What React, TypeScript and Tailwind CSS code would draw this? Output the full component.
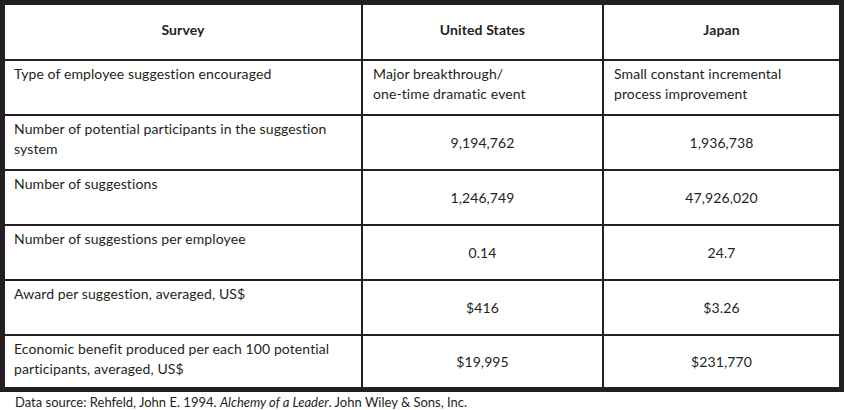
const rows: { label: string[]; us: string[]; jp: string[]; top?: boolean }[] = [
  {
    label: ["Type of employee suggestion encouraged"],
    us: ["Major breakthrough/", "one-time dramatic event"],
    jp: ["Small constant incremental", "process improvement"],
    top: true,
  },
  {
    label: ["Number of potential participants in the suggestion", "system"],
    us: ["9,194,762"],
    jp: ["1,936,738"],
  },
  { label: ["Number of suggestions"], us: ["1,246,749"], jp: ["47,926,020"] },
  { label: ["Number of suggestions per employee"], us: ["0.14"], jp: ["24.7"] },
  { label: ["Award per suggestion, averaged, US$"], us: ["$416"], jp: ["$3.26"] },
  {
    label: ["Economic benefit produced per each 100 potential", "participants, averaged, US$"],
    us: ["$19,995"],
    jp: ["$231,770"],
  },
];

function Lines({ lines }: { lines: string[] }) {
  return (
    <>
      {lines.map((l) => (
        <div key={l}>{l}</div>
      ))}
    </>
  );
}

export default function App() {
  return (
    <div className="w-[846px] h-[410px] overflow-hidden bg-white text-[#231f20] font-['Lato',sans-serif] text-[14px] leading-[20px] tracking-[0.1px]">
      <div className="w-[844px] border-[5px] border-[#231f20]">
        <div className="grid grid-cols-[358px_241px_1fr]">
          {/* header */}
          <div className="h-[56px] border-r-2 border-b-2 border-[#231f20] flex items-center justify-center font-bold pb-[4px]">
            Survey
          </div>
          <div className="h-[56px] border-r-2 border-b-2 border-[#231f20] flex items-center justify-center font-bold pb-[4px]">
            United States
          </div>
          <div className="h-[56px] border-b-2 border-[#231f20] flex items-center justify-center font-bold pb-[4px]">
            Japan
          </div>

          {rows.map((r, i) => {
            const last = i === rows.length - 1;
            const h = last ? "h-[51px]" : "h-[55px] border-b-2";
            return (
              <div key={i} className="contents">
                <div className={`${h} border-r-2 border-[#231f20] pl-[9px] pt-[3px]`}>
                  <Lines lines={r.label} />
                </div>
                {r.top ? (
                  <>
                    <div className={`${h} border-r-2 border-[#231f20] pl-[10px] pt-[3px]`}>
                      <Lines lines={r.us} />
                    </div>
                    <div className={`${h} border-[#231f20] pl-[10px] pt-[3px]`}>
                      <Lines lines={r.jp} />
                    </div>
                  </>
                ) : (
                  <>
                    <div className={`${h} border-r-2 border-[#231f20] flex items-center justify-center`}>
                      <Lines lines={r.us} />
                    </div>
                    <div className={`${h} border-[#231f20] flex items-center justify-center`}>
                      <Lines lines={r.jp} />
                    </div>
                  </>
                )}
              </div>
            );
          })}
        </div>
      </div>
      <div className="pl-[15px] text-[13px] leading-[20px] tracking-normal">
        Data source: Rehfeld, John E. 1994. <i>Alchemy of a Leader</i>. John Wiley &amp; Sons, Inc.
      </div>
    </div>
  );
}
